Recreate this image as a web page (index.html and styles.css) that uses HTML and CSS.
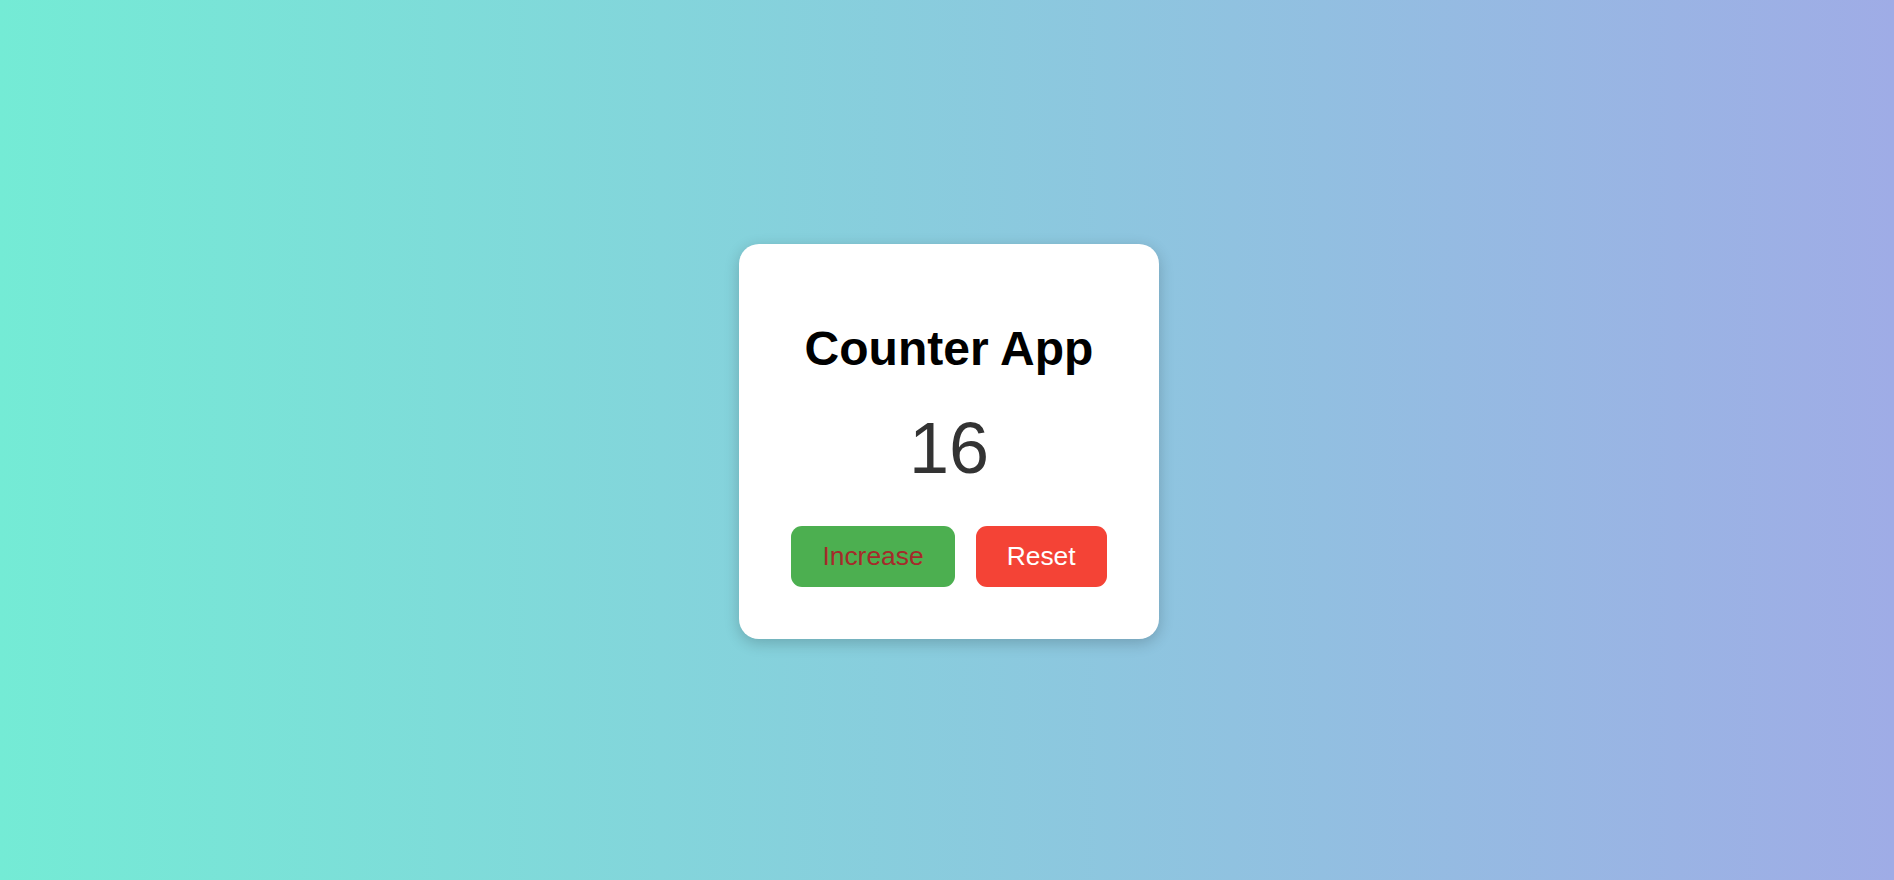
FILE: index.html
```html
<!DOCTYPE html>
<html lang="en">
<head>
<meta charset="utf-8">
<title>Counter App</title>
<link rel="stylesheet" href="styles.css">
</head>
<body>
  <main class="page">
    <section class="card">
      <h1 class="title">Counter App</h1>
      <div class="count">16</div>
      <div class="actions">
        <button class="btn btn-increase">Increase</button>
        <button class="btn btn-reset">Reset</button>
      </div>
    </section>
  </main>
</body>
</html>
```

FILE: styles.css
```css
* { box-sizing: border-box; }
html, body { margin: 0; padding: 0; }
body {
  font-family: "Liberation Sans", Arial, sans-serif;
  background: linear-gradient(to right, #74ebd5, #9face6);
  height: 880px;
}
.page {
  height: 100vh;
  padding: 2px 0 0 4px;
  display: flex;
  align-items: center;
  justify-content: center;
}
.card {
  background: #fff;
  border-radius: 20px;
  padding: 77px 52px 52px;
  box-shadow: 0 4px 15px rgba(0, 0, 0, 0.2);
  display: flex;
  flex-direction: column;
  align-items: center;
}
.title {
  margin: 0;
  font-size: 48px;
  font-weight: 700;
  color: #000;
}
.count {
  margin-top: 31px;
  font-size: 72px;
  color: #333;
}
.actions {
  margin-top: 37px;
  display: flex;
  gap: 21px;
}
.btn {
  font-family: inherit;
  font-size: 26.4px;
  padding: 15px 31px;
  border: none;
  border-radius: 11px;
  cursor: pointer;
}
.btn-increase {
  background: #4caf50;
  color: #a52a2a;
}
.btn-reset {
  background: #f44336;
  color: #fff;
}
```
